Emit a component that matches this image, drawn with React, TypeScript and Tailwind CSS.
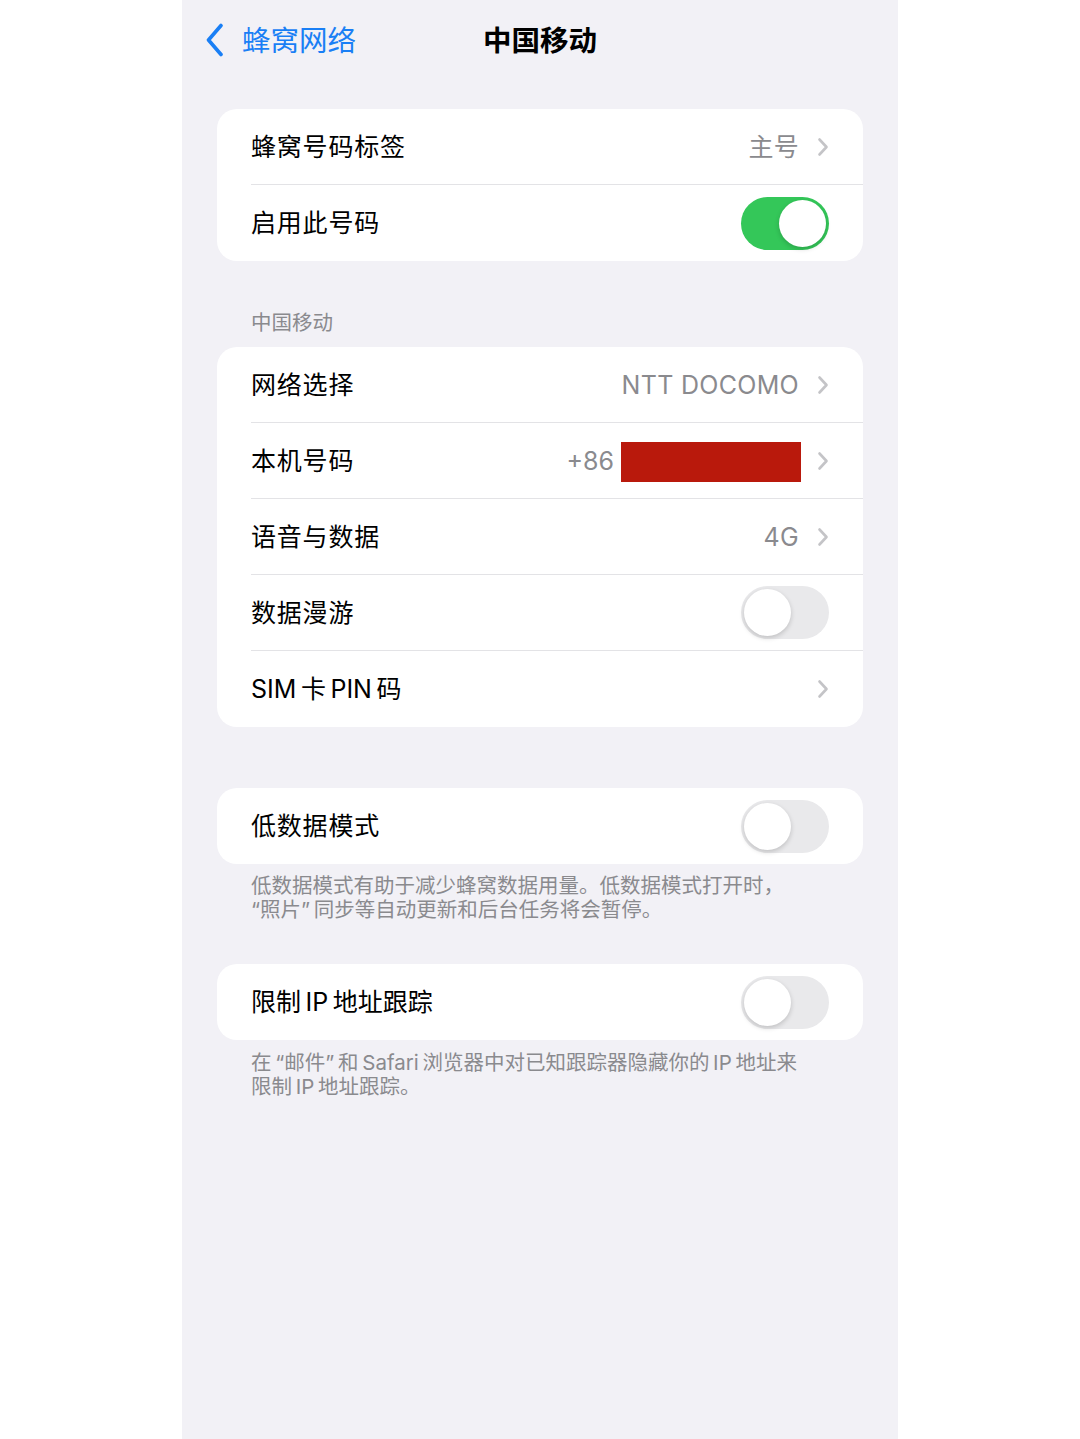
import { ReactNode } from "react"

const font = { fontFamily: 'Inter, "Noto Sans CJK SC", sans-serif' }

function Chevron() {
  return (
    <svg width="12" height="20" viewBox="0 0 12 20" className="shrink-0">
      <path d="M2.5 2.5 L9.5 10 L2.5 17.5" fill="none" stroke="#c4c4c7" strokeWidth="2.6" strokeLinecap="round" strokeLinejoin="round" />
    </svg>
  )
}

function Toggle({ on }: { on?: boolean }) {
  return (
    <div
      className={
        on
          ? "w-[88px] h-[53px] rounded-full bg-[#34c759] p-[3px] flex justify-end"
          : "w-[88px] h-[53px] rounded-full bg-[#e9e9eb] p-[3px] flex justify-start"
      }
    >
      <div className="w-[47px] h-[47px] rounded-full bg-white shadow-[0_2px_5px_rgba(0,0,0,0.18)]" />
    </div>
  )
}

function Row({ label, children, last, tight }: { label: string; children?: ReactNode; last?: boolean; tight?: boolean }) {
  return (
    <div className="pl-[34px]">
      <div
        className={
          last
            ? "h-[76px] flex items-center justify-between pr-[34px]"
            : "h-[76px] flex items-center justify-between pr-[34px] border-b border-[#e3e3e6]"
        }
      >
        <span className={tight ? "text-[25px] text-black pt-[2px]" : "text-[25px] text-black tracking-[0.8px] pt-[2px]"}>{label}</span>
        <div className="flex items-center">{children}</div>
      </div>
    </div>
  )
}

function Value({ text }: { text: string }) {
  return (
    <>
      <span className="text-[25px] text-[#8a8a8e] mr-[18px] tracking-[0.3px] pt-[2px]">{text}</span>
      <Chevron />
    </>
  )
}

function Card({ children }: { children: ReactNode }) {
  return <div className="mx-[35px] bg-white rounded-[20px] overflow-hidden">{children}</div>
}

function Footnote({ children }: { children: ReactNode }) {
  return <p className="mx-[69px] text-[20.5px] leading-[24px] text-[#8a8a8e]">{children}</p>
}

export default function App() {
  return (
    <div className="w-full min-h-[1439px] bg-white" style={font}>
      <div className="mx-auto w-[716px] min-h-[1439px] bg-[#f2f1f6]">
        <div className="h-[80px] grid grid-cols-[1fr_auto_1fr] items-center">
          <div className="flex items-center pl-[23px]">
            <svg width="20" height="34" viewBox="0 0 20 34">
              <path d="M16 2.5 L3.5 17 L16 31.5" fill="none" stroke="#1a7ff5" strokeWidth="3.6" strokeLinecap="round" strokeLinejoin="round" />
            </svg>
            <span className="ml-[17px] text-[28.5px] text-[#1a7ff5] pt-[2px]">蜂窝网络</span>
          </div>
          <span className="text-[28.5px] font-bold text-black pt-[2px]">中国移动</span>
          <div />
        </div>

        <div className="mt-[29px]">
          <Card>
            <Row label="蜂窝号码标签">
              <Value text="主号" />
            </Row>
            <Row label="启用此号码" last>
              <Toggle on />
            </Row>
          </Card>
        </div>

        <div className="mt-[50px] mx-[69px] text-[20.5px] leading-[24px] text-[#8a8a8e]">中国移动</div>

        <div className="mt-[12px]">
          <Card>
            <Row label="网络选择">
              <Value text="NTT DOCOMO" />
            </Row>
            <Row label="本机号码">
              <span className="text-[25px] text-[#8a8a8e] mr-[7px] pt-[2px]">+86</span>
              <div className="w-[180px] h-[40px] bg-[#b9190c] mr-[16px] mt-[2px]" />
              <Chevron />
            </Row>
            <Row label="语音与数据">
              <Value text="4G" />
            </Row>
            <Row label="数据漫游">
              <Toggle />
            </Row>
            <Row label={"SIM\u2009卡\u2009PIN\u2009码"} last tight>
              <Chevron />
            </Row>
          </Card>
        </div>

        <div className="mt-[61px]">
          <Card>
            <Row label="低数据模式" last>
              <Toggle />
            </Row>
          </Card>
        </div>
        <div className="mt-[10px]">
          <Footnote>
            低数据模式有助于减少蜂窝数据用量。低数据模式打开时，
            <br />
            “照片”&#8201;同步等自动更新和后台任务将会暂停。
          </Footnote>
        </div>

        <div className="mt-[42px]">
          <Card>
            <Row label={"限制\u2009IP\u2009地址跟踪"} last tight>
              <Toggle />
            </Row>
          </Card>
        </div>
        <div className="mt-[11px]">
          <Footnote>
            在&#8201;“邮件”&#8201;和&#8201;Safari&#8201;浏览器中对已知跟踪器隐藏你的&#8201;IP&#8201;地址来
            <br />
            限制&#8201;IP&#8201;地址跟踪。
          </Footnote>
        </div>
      </div>
    </div>
  )
}
